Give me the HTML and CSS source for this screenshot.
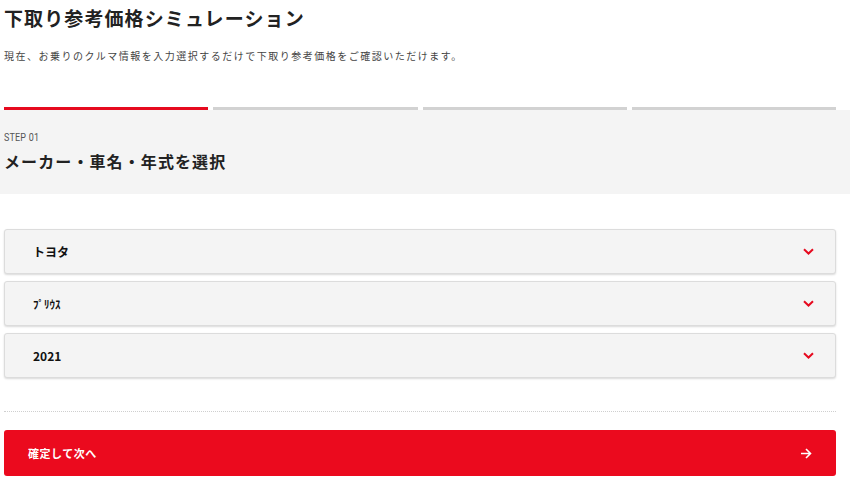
FILE: index.html
```html
<!DOCTYPE html>
<html lang="ja">
<head>
<meta charset="utf-8">
<link rel="stylesheet" href="styles.css">
</head>
<body>
<div class="page">
  <header class="intro">
    <h1 class="title">下取り参考価格シミュレーション</h1>
    <p class="lead">現在、お乗りのクルマ情報を入力選択するだけで下取り参考価格をご確認いただけます。</p>
  </header>
  <div class="progress">
    <span class="seg active"></span>
    <span class="seg"></span>
    <span class="seg"></span>
    <span class="seg"></span>
  </div>
  <section class="step">
    <div class="step-num">STEP 01</div>
    <h2 class="step-title">メーカー・車名・年式を選択</h2>
  </section>
  <div class="selects">
    <div class="select"><span class="select-label">トヨタ</span><svg class="chev" width="11" height="7" viewBox="0 0 11 7"><path d="M1 1.2 L5.5 5.5 L10 1.2" fill="none" stroke="#e60a1f" stroke-width="2"/></svg></div>
    <div class="select"><span class="select-label narrow">ﾌﾟﾘｳｽ</span><svg class="chev" width="11" height="7" viewBox="0 0 11 7"><path d="M1 1.2 L5.5 5.5 L10 1.2" fill="none" stroke="#e60a1f" stroke-width="2"/></svg></div>
    <div class="select"><span class="select-label">2021</span><svg class="chev" width="11" height="7" viewBox="0 0 11 7"><path d="M1 1.2 L5.5 5.5 L10 1.2" fill="none" stroke="#e60a1f" stroke-width="2"/></svg></div>
  </div>
  <hr class="divider">
  <button class="next"><span>確定して次へ</span><svg class="arrow" width="12" height="11" viewBox="0 0 12 11"><path d="M1 5.5 H10.5 M6 1 L10.5 5.5 L6 10" fill="none" stroke="#fff" stroke-width="1.6"/></svg></button>
</div>
</body>
</html>
```
FILE: styles.css
```css
* { box-sizing: border-box; }
html, body { margin: 0; padding: 0; background: #fff; }
body {
  font-family: "Noto Sans CJK JP", "Noto Sans", sans-serif;
  color: #222;
}
.page { width: 850px; }
.intro { padding: 0 14px 0 4px; }
.title {
  margin: 0;
  padding-top: 4px;
  font-size: 19px;
  line-height: 28px;
  font-weight: 700;
  letter-spacing: 1.1px;
  color: #222;
}
.lead {
  margin: 16px 0 0;
  font-size: 10px;
  line-height: 16px;
  letter-spacing: 1.5px;
  color: #444;
}
.progress {
  display: grid;
  grid-template-columns: repeat(4, 1fr);
  gap: 5px;
  margin: 43px 14px 0 4px;
}
.seg { display: block; height: 3px; background: #d2d2d2; }
.seg.active { background: #e60a1f; }
.step {
  background: #f4f4f4;
  padding: 21px 14px 14px 4px;
  height: 84px;
}
.step-num {
  font-family: "Liberation Sans Narrow", "Roboto", sans-serif;
  font-size: 10px;
  line-height: 14px;
  color: #555;
  letter-spacing: 0.2px;
  transform: scaleX(0.9);
  transform-origin: left;
}
.step-title {
  margin: 5px 0 0;
  font-size: 16px;
  line-height: 22px;
  font-weight: 700;
  letter-spacing: 1.1px;
  color: #222;
}
.selects {
  display: flex;
  flex-direction: column;
  gap: 7px;
  margin: 35px 14px 0 4px;
}
.select {
  display: flex;
  align-items: center;
  justify-content: space-between;
  height: 45px;
  padding: 0 21px 0 28px;
  background: #f4f4f4;
  border: 1px solid #dcdcdc;
  border-radius: 3px;
  box-shadow: 0 1px 2px rgba(0,0,0,0.15);
}
.select-label {
  font-size: 12px;
  font-weight: 700;
  color: #111;
  font-family: "Noto Sans CJK JP", sans-serif;
}
.select-label.narrow { font-size: 11px; }
.chev { display: block; }
.divider {
  margin: 33px 14px 0 4px;
  border: 0;
  border-top: 1px dotted #cfcfcf;
  height: 0;
}
.next {
  display: flex;
  align-items: center;
  justify-content: space-between;
  width: 832px;
  height: 46px;
  margin: 18px 14px 0 4px;
  padding: 0 24px 0 24px;
  background: #eb0a1e;
  border: 0;
  border-radius: 3px;
  color: #fff;
  font-family: "Noto Sans CJK JP", sans-serif;
  font-size: 11px;
  font-weight: 700;
  letter-spacing: 0.5px;
  cursor: pointer;
}
.arrow { display: block; }
```
